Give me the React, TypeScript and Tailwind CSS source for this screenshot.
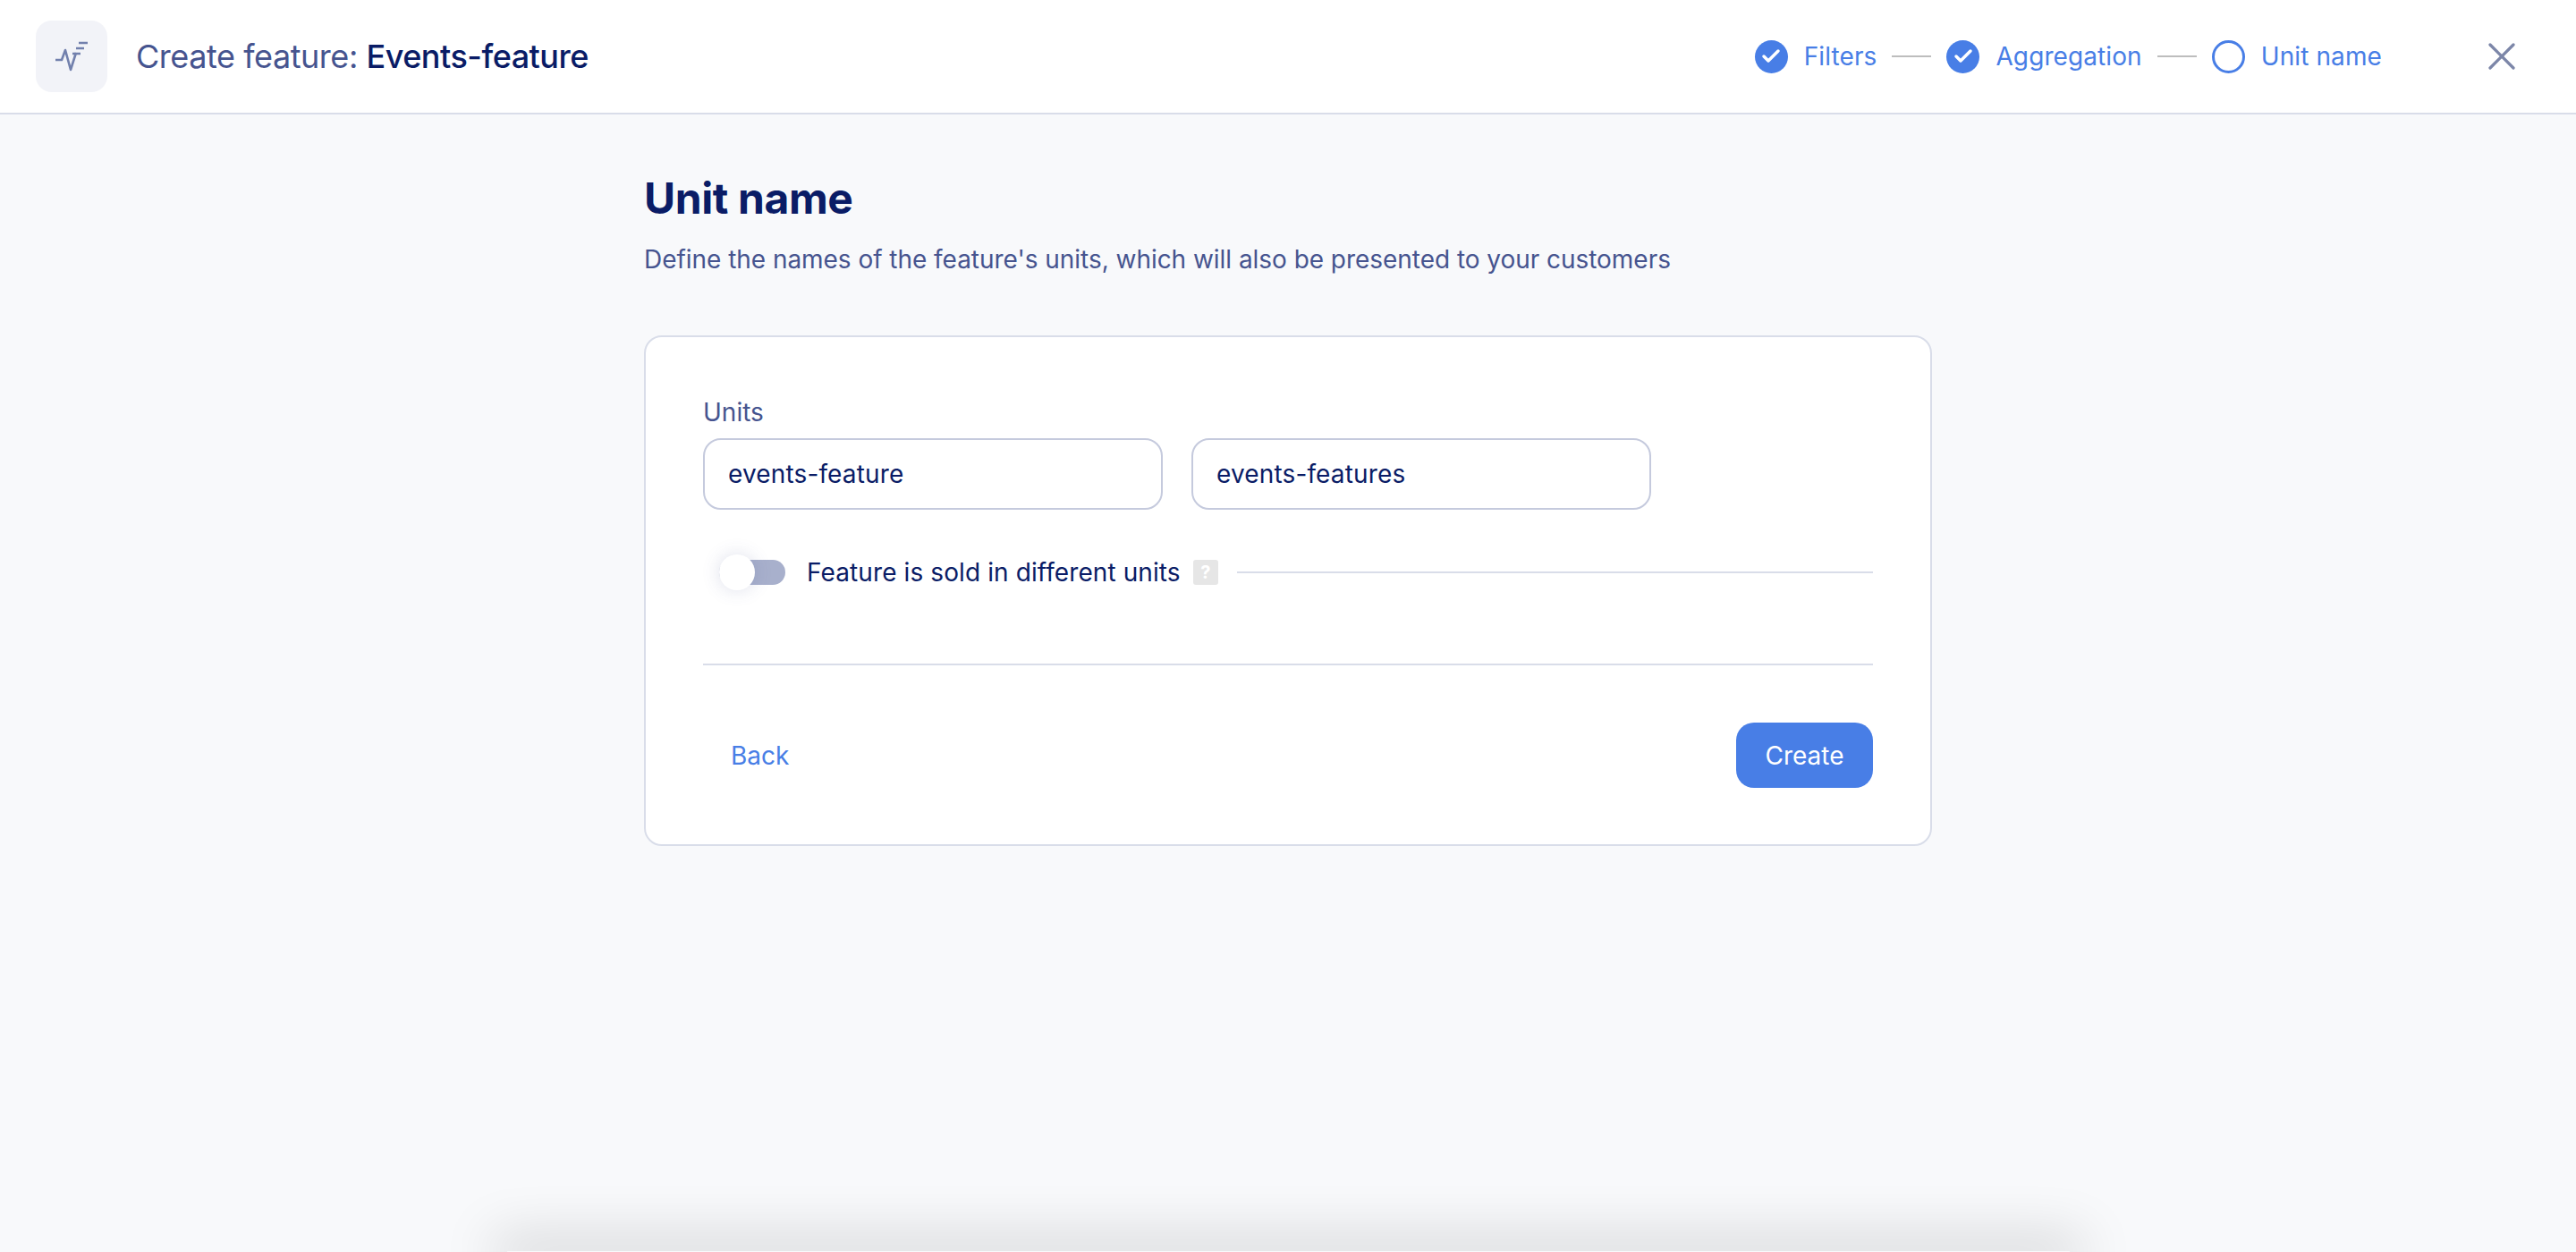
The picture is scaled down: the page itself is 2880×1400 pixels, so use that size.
import React from 'react';
import { Check, X } from 'lucide-react';

const font = "font-['Inter',sans-serif]";

function Step({ label, done }: { label: string; done?: boolean }) {
  return (
    <div className="flex items-center gap-[18px]">
      {done ? (
        <span className="flex h-[37px] w-[37px] items-center justify-center rounded-full bg-[#487ee6]">
          <Check className="h-[24px] w-[24px] text-white" strokeWidth={3.5} />
        </span>
      ) : (
        <span className="h-[37px] w-[37px] rounded-full border-[3px] border-[#487ee6]" />
      )}
      <span className="text-[28px] leading-[36px] tracking-[0.1px] text-[#487ee6]">{label}</span>
    </div>
  );
}

function Connector() {
  return <span className="mx-[17px] h-[2px] w-[44px] bg-[#bdbdbd]" />;
}

function UnitInput({ value }: { value: string }) {
  return (
    <div className="flex h-[80px] w-[514px] items-center rounded-[20px] border-2 border-[#c5cadd] bg-white px-[26px] text-[28px] tracking-[0.15px] text-[#0a1c66]">
      {value}
    </div>
  );
}

export default function App() {
  return (
    <div className={`${font} flex h-[1400px] w-[2880px] flex-col overflow-hidden bg-[#f8f9fb]`}>
      <header className="flex h-[128px] items-center border-b-2 border-[#d9dde9] bg-white pl-[40px] pr-[57px]">
        <div className="flex h-[80px] w-[80px] items-center justify-center rounded-[18px] bg-[#f2f3f8]">
          <svg width="38" height="34" viewBox="0 0 38 34" fill="none" stroke="#7280ad" strokeWidth="2.6">
            <path d="M1 21h7l4-11 6 22 6-19" strokeLinejoin="round" />
            <path d="M27 2h10M24 8h9M20 14h9" />
          </svg>
        </div>
        <h1 className="ml-[32px] text-[36px] tracking-[-0.45px] text-[#46548f]">
          Create feature: <span className="font-medium tracking-[-0.5px] text-[#0a1c66]">Events-feature</span>
        </h1>
        <nav className="ml-auto flex items-center">
          <Step label="Filters" done />
          <Connector />
          <Step label="Aggregation" done />
          <Connector />
          <Step label="Unit name" />
        </nav>
        <X className="ml-[108px] h-[52px] w-[52px] text-[#7c86a8]" strokeWidth={1.5} />
      </header>

      <main className="flex flex-1 flex-col pl-[720px] pt-[62px]">
        <h2 className="text-[48px] font-bold leading-[64px] tracking-[-0.4px] text-[#0a1c66]">Unit name</h2>
        <p className="mt-[18px] text-[28px] leading-[36px] tracking-[-0.04px] text-[#46548f]">
          Define the names of the feature's units, which will also be presented to your customers
        </p>

        <section className="mt-[67px] h-[571px] w-[1440px] rounded-[20px] border-2 border-[#d9dde9] bg-white px-[64px] pt-[66px]">
          <label className="block text-[28px] leading-[36px] text-[#46548f]">Units</label>
          <div className="mt-[11px] flex gap-[32px]">
            <UnitInput value="events-feature" />
            <UnitInput value="events-features" />
          </div>

          <div className="mt-[50px] flex h-[40px] items-center">
            <div className="relative ml-[18px] h-[28px] w-[74px] rounded-full bg-[#a8b0cc]">
              <span className="absolute left-0 top-[-6px] h-[40px] w-[40px] rounded-full bg-white shadow-[0_0_20px_rgba(70,84,143,0.18)]" />
            </div>
            <span className="ml-[24px] text-[28px] tracking-[0.1px] text-[#0a1c66]">Feature is sold in different units</span>
            <span className="ml-[14px] flex h-[28px] w-[28px] items-center justify-center rounded-[3px] bg-[#e6e6e6] text-[20px] font-bold text-white">
              ?
            </span>
            <span className="ml-[21px] h-[2px] flex-1 bg-[#d9dde9]" />
          </div>

          <div className="mt-[82px] h-[2px] bg-[#d9dde9]" />

          <div className="mt-[64px] flex items-center justify-between">
            <button className="px-[31px] text-[28px] text-[#487ee6]">Back</button>
            <button className="h-[73px] w-[153px] rounded-[20px] bg-[#487ee6] text-[28px] text-white">Create</button>
          </div>
        </section>
      </main>

      <div className="mx-auto h-px w-[1747px] rounded-full shadow-[0_0_60px_15px_rgba(0,0,0,0.18)]" />
    </div>
  );
}
